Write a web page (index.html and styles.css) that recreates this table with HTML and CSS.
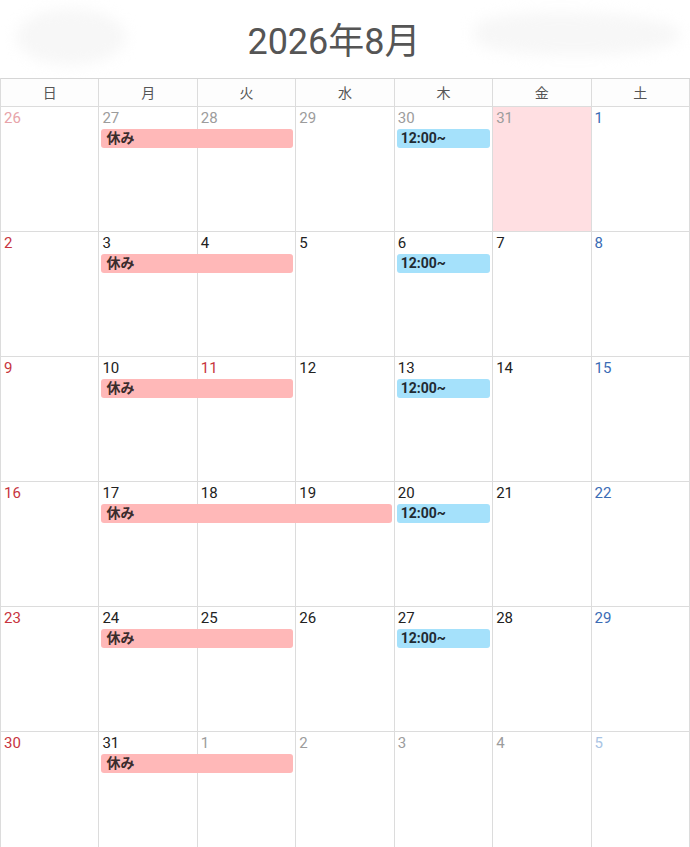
FILE: index.html
```html
<!DOCTYPE html>
<html lang="ja">
<head>
<meta charset="utf-8">
<title>2026年8月</title>
<link rel="stylesheet" href="styles.css">
</head>
<body>
<div class="page">
  <div class="title-bar">
    <div class="blob blob-left"></div>
    <h1 class="title">2026年8月</h1>
    <div class="blob blob-right"></div>
  </div>
  <div class="calendar">
    <div class="dow-row">
      <div class="dow">日</div><div class="dow">月</div><div class="dow">火</div><div class="dow">水</div><div class="dow">木</div><div class="dow">金</div><div class="dow">土</div>
    </div>

    <div class="week">
      <div class="cell c1"><span class="num sun other">26</span></div>
      <div class="cell c2"><span class="num other">27</span></div>
      <div class="cell c3"><span class="num other">28</span></div>
      <div class="cell c4"><span class="num other">29</span></div>
      <div class="cell c5"><span class="num other">30</span></div>
      <div class="cell c6 today"><span class="num other">31</span></div>
      <div class="cell c7"><span class="num sat">1</span></div>
      <div class="event rest s2 w2">休み</div>
      <div class="event time s5 w1">12:00~</div>
    </div>

    <div class="week">
      <div class="cell c1"><span class="num sun">2</span></div>
      <div class="cell c2"><span class="num">3</span></div>
      <div class="cell c3"><span class="num">4</span></div>
      <div class="cell c4"><span class="num">5</span></div>
      <div class="cell c5"><span class="num">6</span></div>
      <div class="cell c6"><span class="num">7</span></div>
      <div class="cell c7"><span class="num sat">8</span></div>
      <div class="event rest s2 w2">休み</div>
      <div class="event time s5 w1">12:00~</div>
    </div>

    <div class="week">
      <div class="cell c1"><span class="num sun">9</span></div>
      <div class="cell c2"><span class="num">10</span></div>
      <div class="cell c3"><span class="num sun">11</span></div>
      <div class="cell c4"><span class="num">12</span></div>
      <div class="cell c5"><span class="num">13</span></div>
      <div class="cell c6"><span class="num">14</span></div>
      <div class="cell c7"><span class="num sat">15</span></div>
      <div class="event rest s2 w2">休み</div>
      <div class="event time s5 w1">12:00~</div>
    </div>

    <div class="week">
      <div class="cell c1"><span class="num sun">16</span></div>
      <div class="cell c2"><span class="num">17</span></div>
      <div class="cell c3"><span class="num">18</span></div>
      <div class="cell c4"><span class="num">19</span></div>
      <div class="cell c5"><span class="num">20</span></div>
      <div class="cell c6"><span class="num">21</span></div>
      <div class="cell c7"><span class="num sat">22</span></div>
      <div class="event rest s2 w3">休み</div>
      <div class="event time s5 w1">12:00~</div>
    </div>

    <div class="week">
      <div class="cell c1"><span class="num sun">23</span></div>
      <div class="cell c2"><span class="num">24</span></div>
      <div class="cell c3"><span class="num">25</span></div>
      <div class="cell c4"><span class="num">26</span></div>
      <div class="cell c5"><span class="num">27</span></div>
      <div class="cell c6"><span class="num">28</span></div>
      <div class="cell c7"><span class="num sat">29</span></div>
      <div class="event rest s2 w2">休み</div>
      <div class="event time s5 w1">12:00~</div>
    </div>

    <div class="week">
      <div class="cell c1"><span class="num sun">30</span></div>
      <div class="cell c2"><span class="num">31</span></div>
      <div class="cell c3"><span class="num other">1</span></div>
      <div class="cell c4"><span class="num other">2</span></div>
      <div class="cell c5"><span class="num other">3</span></div>
      <div class="cell c6"><span class="num other">4</span></div>
      <div class="cell c7"><span class="num sat other">5</span></div>
      <div class="event rest s2 w2">休み</div>
    </div>
  </div>
</div>
</body>
</html>
```

FILE: styles.css
```css
* { box-sizing: border-box; }
html, body {
  margin: 0;
  padding: 0;
  background: #ffffff;
}
body {
  font-family: Roboto, "Noto Sans CJK JP", sans-serif;
  color: #222;
}
.page {
  width: 690px;
}
.title-bar {
  height: 78px;
  display: grid;
  grid-template-columns: 1fr auto 1fr;
  align-items: center;
}
.title {
  margin: 0 22px 0 0;
  padding-top: 6px;
  font-family: Roboto, "Noto Sans CJK JP", sans-serif;
  font-weight: 400;
  font-size: 36px;
  line-height: 36px;
  color: #555;
  letter-spacing: 0;
}
.blob {
  background: #f7f7f7;
  border-radius: 50%;
  filter: blur(7px);
}
.blob-left {
  justify-self: start;
  margin-left: 16px;
  margin-top: -4px;
  width: 110px;
  height: 56px;
}
.blob-right {
  justify-self: end;
  margin-right: 10px;
  margin-top: -10px;
  width: 206px;
  height: 42px;
  border-radius: 35% 50% 45% 40%;
}
.calendar {
  border-left: 1px solid #dcdcdc;
}
.dow-row {
  display: grid;
  grid-template-columns: repeat(7, 1fr);
  border-top: 1px solid #d6d6d6;
  height: 29px;
}
.dow {
  border-right: 1px solid #dcdcdc;
  border-bottom: 1px solid #dcdcdc;
  text-align: center;
  font-family: "Noto Sans CJK JP", sans-serif;
  font-size: 14px;
  line-height: 27px;
  color: #555;
  background: #fdfdfd;
}
.week {
  display: grid;
  grid-template-columns: repeat(7, 1fr);
  grid-template-rows: 22px 19px 1fr;
  height: 125px;
}
.cell {
  grid-row: 1 / -1;
  border-right: 1px solid #dcdcdc;
  border-bottom: 1px solid #dcdcdc;
  padding: 2px 0 0 3px;
}
.c1 { grid-column: 1; }
.c2 { grid-column: 2; }
.c3 { grid-column: 3; }
.c4 { grid-column: 4; }
.c5 { grid-column: 5; }
.c6 { grid-column: 6; }
.c7 { grid-column: 7; }
.today { background: #ffdfe2; }
.num {
  display: block;
  font-size: 15px;
  line-height: 18px;
  color: #222;
}
.num.sun { color: #c7343e; }
.num.sat { color: #3b6cb5; }
.num.other { color: #9c9c9c; }
.num.sun.other { color: #e7a3a9; }
.num.sat.other { color: #a9c4e4; }
.event {
  grid-row: 2;
  margin: 0 3px 0 2px;
  border-radius: 3px;
  padding-left: 5px;
  font-family: Roboto, "Noto Sans CJK JP", sans-serif;
  font-weight: 700;
  font-size: 14px;
  line-height: 19px;
  white-space: nowrap;
  overflow: hidden;
}
.event.rest {
  background: #ffb8b8;
  color: #3a2c2c;
}
.event.time {
  background: #a5e1fb;
  color: #1f2a33;
  padding-left: 4px;
}
.s2 { grid-column-start: 2; }
.s5 { grid-column-start: 5; }
.w1 { grid-column-end: span 1; }
.w2 { grid-column-end: span 2; }
.w3 { grid-column-end: span 3; }
```
